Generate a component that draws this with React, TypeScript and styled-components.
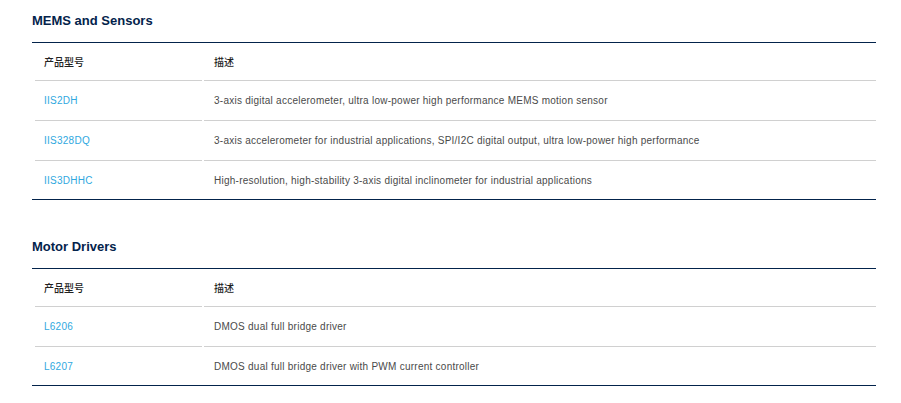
import React from 'react';
import styled, { createGlobalStyle } from 'styled-components';

const GlobalStyle = createGlobalStyle`
  html, body {
    margin: 0;
    padding: 0;
    background: #fff;
  }
  body {
    font-family: "Liberation Sans", Arial, "Noto Sans CJK SC", sans-serif;
  }
`;

const Page = styled.div`
  padding: 0 0 0 32px;
  width: 844px;
`;

const Section = styled.section`
  padding-top: 13px;
  margin-bottom: 26px;
`;

const Title = styled.h2`
  margin: 0 0 13px 0;
  font-size: 13px;
  line-height: 16px;
  font-weight: bold;
  color: #03234b;
`;

const Table = styled.div`
  border-top: 1px solid #03234b;
  border-bottom: 1px solid #03234b;
`;

const Row = styled.div<{ $head?: boolean }>`
  display: grid;
  grid-template-columns: 167px 672px;
  column-gap: 2px;
  padding-left: 3px;
  height: ${(p) => (p.$head ? '38px' : '40px')};

  &:last-child {
    height: 38px;
  }
  &:last-child > div {
    border-bottom: none;
  }
`;

const Cell = styled.div<{ $head?: boolean; $link?: boolean; $first?: boolean }>`
  display: flex;
  align-items: center;
  padding-left: ${(p) => (p.$first ? '9px' : '10px')};
  border-bottom: 1px solid #d0d0d0;
  font-size: 10px;
  letter-spacing: ${(p) => (p.$head ? '0' : '0.25px')};
  font-weight: ${(p) => (p.$head ? 500 : 'normal')};
  color: ${(p) => (p.$head ? '#222' : p.$link ? '#2fa8e0' : '#4a4a4a')};
  font-family: ${(p) =>
    p.$head
      ? '"Noto Sans CJK SC", "Liberation Sans", sans-serif'
      : '"Liberation Sans", Arial, sans-serif'};
`;

type Product = {
  part: string;
  desc: string;
};

type Group = {
  title: string;
  items: Product[];
};

const groups: Group[] = [
  {
    title: 'MEMS and Sensors',
    items: [
      {
        part: 'IIS2DH',
        desc: '3-axis digital accelerometer, ultra low-power high performance MEMS motion sensor',
      },
      {
        part: 'IIS328DQ',
        desc: '3-axis accelerometer for industrial applications, SPI/I2C digital output, ultra low-power high performance',
      },
      {
        part: 'IIS3DHHC',
        desc: 'High-resolution, high-stability 3-axis digital inclinometer for industrial applications',
      },
    ],
  },
  {
    title: 'Motor Drivers',
    items: [
      { part: 'L6206', desc: 'DMOS dual full bridge driver' },
      { part: 'L6207', desc: 'DMOS dual full bridge driver with PWM current controller' },
    ],
  },
];

const App: React.FC = () => {
  return (
    <Page>
      <GlobalStyle />
      {groups.map((g, i) => (
        <Section key={`group-${i}`}>
          <Title>{g.title}</Title>
          <Table>
            <Row $head>
              <Cell $head $first>产品型号</Cell>
              <Cell $head>描述</Cell>
            </Row>
            {g.items.map((item, idx) => (
              <Row key={`row-${i}-${idx}`}>
                <Cell $link $first>{item.part}</Cell>
                <Cell>{item.desc}</Cell>
              </Row>
            ))}
          </Table>
        </Section>
      ))}
    </Page>
  );
};

export default App;
